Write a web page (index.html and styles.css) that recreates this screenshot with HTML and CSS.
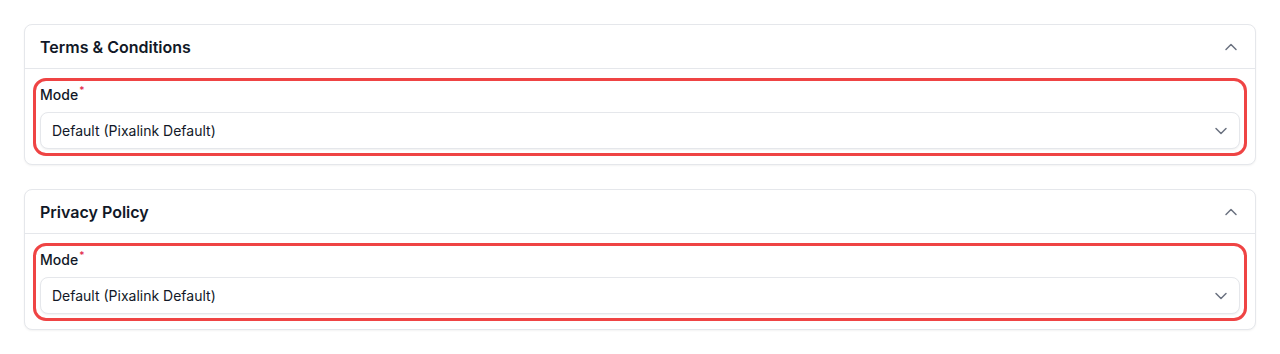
FILE: index.html
```html
<!DOCTYPE html>
<html lang="en">
<head>
<meta charset="utf-8">
<title>Legal settings</title>
<link rel="stylesheet" href="styles.css">
</head>
<body>
<main class="page">
  <section class="card">
    <header class="card-header">
      <h2 class="card-title">Terms &amp; Conditions</h2>
      <svg class="icon" viewBox="0 0 16 16" aria-hidden="true"><path d="M3 10.5 8 5.5l5 5" /></svg>
    </header>
    <div class="card-body">
      <div class="field">
        <label class="label">Mode<sup class="req">*</sup></label>
        <div class="select">
          <span class="select-value">Default (Pixalink Default)</span>
          <svg class="icon" viewBox="0 0 16 16" aria-hidden="true"><path d="M3 5.5l5 5 5-5" /></svg>
        </div>
      </div>
    </div>
  </section>
  <section class="card">
    <header class="card-header">
      <h2 class="card-title">Privacy Policy</h2>
      <svg class="icon" viewBox="0 0 16 16" aria-hidden="true"><path d="M3 10.5 8 5.5l5 5" /></svg>
    </header>
    <div class="card-body">
      <div class="field">
        <label class="label">Mode<sup class="req">*</sup></label>
        <div class="select">
          <span class="select-value">Default (Pixalink Default)</span>
          <svg class="icon" viewBox="0 0 16 16" aria-hidden="true"><path d="M3 5.5l5 5 5-5" /></svg>
        </div>
      </div>
    </div>
  </section>
</main>
</body>
</html>
```
FILE: styles.css
```css
* { box-sizing: border-box; }
html, body { margin: 0; background: #ffffff; }
body {
  font-family: Inter, "Liberation Sans", sans-serif;
  color: #111827;
}
.page {
  padding: 24px;
  display: flex;
  flex-direction: column;
  gap: 24px;
}
.card {
  border: 1px solid #e5e7eb;
  border-radius: 8px;
  background: #fff;
  box-shadow: 0 1px 2px rgba(0, 0, 0, 0.05);
}
.card-header {
  height: 44px;
  padding: 0 16px 0 15px;
  display: flex;
  align-items: center;
  justify-content: space-between;
  border-bottom: 1px solid #e5e7eb;
}
.card-title {
  margin: 0;
  font-size: 16px;
  line-height: 24px;
  font-weight: 600;
  color: #111827;
}
.icon {
  width: 16px;
  height: 16px;
  fill: none;
  stroke: #6b7280;
  stroke-width: 1.5;
  stroke-linecap: round;
  stroke-linejoin: round;
  flex: none;
}
.card-body {
  padding: 16px 15px 15px;
}
.field {
  display: flex;
  flex-direction: column;
  border-radius: 6px;
  outline: 3px solid #ef4444;
  outline-offset: 4px;
}
.label {
  font-size: 14px;
  line-height: 20px;
  font-weight: 500;
  color: #111827;
  margin-bottom: 7px;
}
.req {
  color: #e11d48;
  font-size: 10px;
  line-height: 0;
  vertical-align: 6px;
  margin-left: 1px;
}
.select {
  height: 37px;
  border: 1px solid #e5e7eb;
  border-radius: 8px;
  box-shadow: 0 1px 2px rgba(0, 0, 0, 0.06);
  padding: 0 10px 0 11px;
  display: flex;
  align-items: center;
  justify-content: space-between;
  background: #fff;
}
.select-value {
  font-size: 14px;
  line-height: 20px;
  color: #111827;
}
```
